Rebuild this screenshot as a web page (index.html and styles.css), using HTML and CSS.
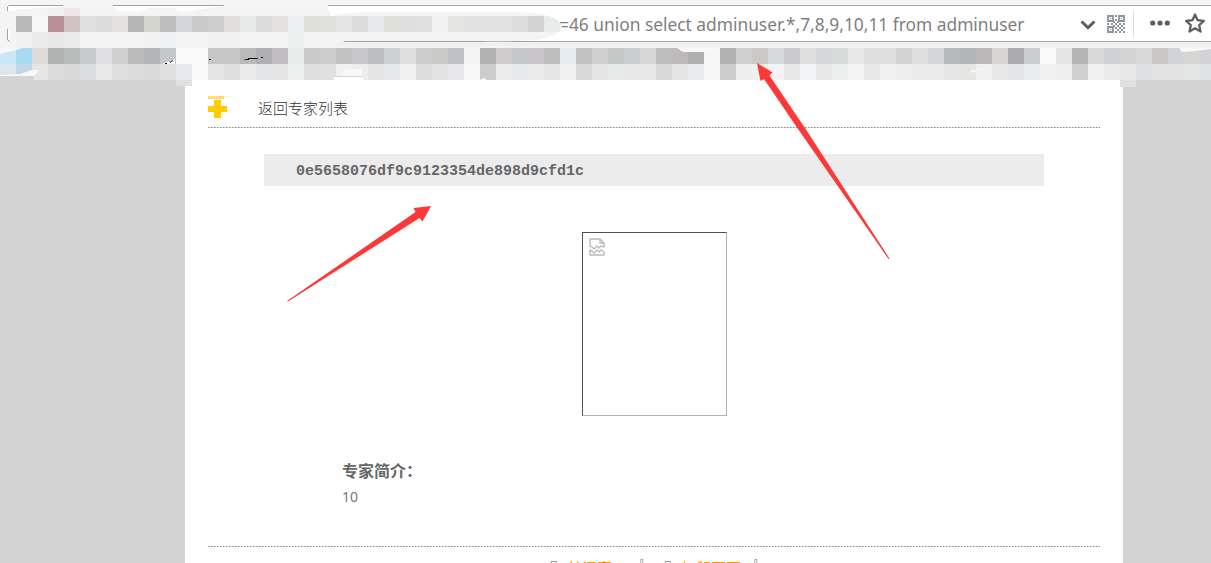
FILE: index.html
```html
<!DOCTYPE html>
<html lang="zh-CN">
<head>
	<meta charset="utf-8">
	<title>返回专家列表</title>
	<link rel="stylesheet" href="styles.css">
	<script type="text/javascript" src="mosaic.js"></script>
</head>
<body>
<div id="browser">
	<div id="urlbar">
		<span class="url">=46 union select adminuser.*,7,8,9,10,11 from adminuser</span>
		<svg class="chevron" width="16" height="10" viewBox="0 0 16 10"><path d="M1.500 1.500L8 7.700L14.500 1.500" /></svg>
		<svg class="qr" width="18" height="18" viewBox="0 0 18 18">
			<path d="M1 1h5v5H1zM12 1h5v5h-5zM1 12h5v5H1z" />
			<path class="bits" d="M3 3h1v1H3zM14 3h1v1h-1zM3 14h1v1H3zM8 0h2v2H8zM8 4h2v2H8zM0 8h2v2H0zM4 8h2v2H4zM8 8h2v2H8zM12 8h2v2h-2zM16 8h2v2h-2zM6 6h2v2H6zM10 6h2v2h-2zM10 10h2v2h-2zM14 10h2v2h-2zM6 10h2v2H6zM8 12h2v2H8zM12 12h2v2h-2zM16 12h2v2h-2zM10 14h2v2h-2zM14 14h2v2h-2zM8 16h2v2H8zM12 16h2v2h-2zM16 16h2v2h-2z" />
		</svg>
		<span class="divider"></span>
		<svg class="dots" width="20" height="6" viewBox="0 0 20 6"><circle cx="2.700" cy="3" r="2.600"/><circle cx="10" cy="3" r="2.600"/><circle cx="17.300" cy="3" r="2.600"/></svg>
		<svg class="star" width="20" height="20" viewBox="0 0 20 20"><path d="M10 1.500L12.500 7.200L18.800 8L14.200 12.100L15.500 18.500L10 15.300L4.500 18.500L5.800 12.100L1.200 8L7.500 7.200Z" /></svg>
	</div>
	<svg id="smudge" width="1211" height="88" viewBox="0 0 1211 88">
		<path fill="#f4f4f4" d="M0 3H328V8L331 16Q345 13 365 12H500Q538 12 552 17Q562 22 562 27Q558 37 535 40Q505 42 482 41H345Q339 43 334 48H0Z" />
		<path fill="#fff" d="M8 6H61V7L42 8L22 9L8 11ZM113 6H224L203 9L192 11H179L174 8H148L140 11H116V9ZM8 29L11 31L9 40H8Z" />
		<path fill="none" stroke="#a2a2a2" d="M7.500 11V7L9 5.500H63M113 5.500H224M7.500 29V40L10 41.500" />
		<g id="tiles"></g>
		<path fill="#f8f8f8" d="M0 48H23L16 50L12 51L0 54ZM0 75L20 74L32 70H39L34 76H0ZM162 64L167 62L175 59V64ZM341 74L347 69H362V76H341ZM677 48H720L705 52H683L680 50ZM1179 48H1211V49L1195 51L1182 52ZM971 70L985 69L977 71L972 73Z" />
		<path fill="#d4d4d4" d="M0 76H34V80H0ZM334 76H362V77H334Z" />
		<path fill="#fff" d="M334 77H363V80H334ZM480 80L484 78L487 80Z" />
		<path fill="#dfe0e2" d="M176 80H192V86H176ZM1120 80H1136V87H1120Z" />
		<path fill="none" stroke="#111" d="M165 63.500h2M170 62.500l3-2M209 59.500h2M244 59.500h5M248 58.500h10M261 57.500h2" />
		<path fill="none" stroke="#55bce5" d="M169 62l4-2M244 60h2" />
	</svg>
</div>
<div id="page">
	<div class="title">
		<svg width="30" height="24" viewBox="0 0 30 24">
			<path fill="#ffde70" d="M0 0H16V3H0Z" />
			<path fill="#fff2c8" d="M16 0H28L20 1L16 2Z" />
			<path fill="#fc0" d="M6 4H13V10H19V16H13V22H6V16H0V10H6Z" />
		</svg>
		<a>返回专家列表</a>
	</div>
	<div class="name">0e5658076df9c9123354de898d9cfd1c</div>
	<div class="photo">
		<svg width="16" height="18" viewBox="0 0 16 18">
			<path d="M1 8V1H11L15 5V9L12 8L10 10L8 8L5 11L3 9ZM11 1V5H15M1 17V12L3 13L5 15L8 12L10 14L12 12L15 14V17Z" />
		</svg>
	</div>
	<div class="intro">
		<h3>专家简介：</h3>
		<p>10</p>
	</div>
	<div class="links">
		<span>『</span><a>关闭窗口</a><span class="close">』</span><span>『</span><a>打印页面</a><span class="close">』</span>
	</div>
</div>
<svg id="arrows" width="1211" height="563" viewBox="0 0 1211 563">
	<path d="M431 206L413.500 208L415.500 212L287 301L288 301.500L419.500 218L422.500 221.500Z" />
	<path d="M757 63L772.500 72.500L769.500 75.500L805 128L889.500 258.500L888.500 259L798 129L764 79L760.500 81Z" />
</svg>
</body>
</html>
```
FILE: styles.css
```css
body {
	margin: 0;
	height: 563px;
	overflow: hidden;
	background: #d3d3d3;
	color: #555;
	font-family: "Noto Sans CJK SC", sans-serif;
	font-size: 15px;
}
#browser {
	position: relative;
	box-sizing: border-box;
	height: 80px;
	padding: 5px 0 0 7px;
	background: linear-gradient(#f4f4f4, #f9f9f9 8px, #f9f9f9 40px, #eee 44px, #f8f8f8 50px);
}
#urlbar {
	display: flex;
	align-items: center;
	box-sizing: border-box;
	height: 37px;
	padding-left: 551px;
	border: 1px solid #a2a2a2;
	border-right: none;
	background: #fff;
}
.url {
	width: 521px;
	color: #808080;
	font-family: "Noto Sans", sans-serif;
	font-size: 17.35px;
	white-space: nowrap;
}
svg {
	display: block;
	flex: none;
}
.chevron {
	margin-top: 2px;
	fill: none;
	stroke: #606060;
	stroke-width: 3;
}
.qr {
	margin-left: 11px;
	fill: none;
	stroke: #8b93a1;
	stroke-width: 1.8;
}
.qr .bits {
	fill: #8b93a1;
	stroke: none;
}
.divider {
	width: 1px;
	height: 26px;
	margin-left: 8px;
	background: #d9d9d9;
}
.dots {
	margin-left: 16px;
	fill: #606060;
}
.star {
	margin-left: 15px;
	fill: none;
	stroke: #606060;
	stroke-width: 2.3;
	stroke-linejoin: round;
}
.dots, .star {
	margin-top: -1px;
}
#smudge, #arrows {
	position: absolute;
	top: 0;
	left: 0;
}
#arrows {
	fill: #fc3838;
}
#page {
	box-sizing: border-box;
	width: 938px;
	height: 483px;
	margin-left: 185px;
	padding: 0 23px;
	background: #fff;
	overflow: hidden;
}
.title, .links {
	background: repeating-linear-gradient(90deg, #888 0, #888 1px, #bbb 1px, #bbb 2px, #f0f0f0 2px, #f0f0f0 3px) no-repeat;
	background-size: 100% 1px;
}
.title {
	display: flex;
	gap: 20px;
	height: 48px;
	background-position: 0 47px;
}
.title svg {
	margin-top: 16px;
}
.title a {
	color: #333;
	font-weight: 300;
	line-height: 22px;
	margin-top: 17px;
}
.name {
	box-sizing: border-box;
	width: 780px;
	height: 32px;
	margin: 26px 0 0 56px;
	padding: 3px 0 0 32px;
	background: #ececec;
	color: #666;
	font: bold 15px/29px "Liberation Mono", monospace;
}
.photo {
	box-sizing: border-box;
	width: 145px;
	height: 184px;
	margin: 46px 0 0 374px;
	padding: 5px 6px;
	border: 1px solid #b0b0b0;
	border-top-color: #505050;
	border-left-color: #505050;
}
.photo svg {
	fill: none;
	stroke: #bcbcbc;
	stroke-width: 1.4;
}
.intro {
	height: 86px;
	margin: 44px 0 0 134px;
}
.intro h3 {
	margin: 0;
	color: #666;
	font-size: 16px;
	line-height: 20px;
}
.intro p {
	margin: 7px 0 0;
	color: #777;
	font: 14px/20px "Noto Sans", sans-serif;
}
.links {
	display: flex;
	justify-content: center;
	gap: 10px;
	padding-top: 11px;
	line-height: 22px;
	white-space: nowrap;
}
.links span {
	width: 15px;
}
.links span:nth-child(4) {
	margin-left: -6px;
}
.links .close {
	margin-top: -6px;
}
.links a {
	color: #f90;
}
```
FILE: mosaic.js
```js
// colours of the 16px tiles, one row per entry
var rows = [
	{x: 3, y: 8, h: 8, c: "f0f0f0 eee7e8"},
	{x: 1, y: 16, h: 16, c: "b9b9b9 f7f7f7 ba9097 cfc1c4 e0e0e0 dcdcdc e3e2df b6b6b6 d5d5d0 bdbdbd d4d6db cacaca cecece e0dfdc e7eae8 dcdcdc e2e1df eeeff1 dfdfda e0e0dc e4e4e4 dbdbdb e7eaea e0e0db dedede e0e0e0 f1f2f1 e5e5e1 e1e1e1 e1e1e1 e1e1e1 dddddd d3d3d3"},
	{x: 1, y: 32, h: 16, c: "f0f0f0 ebebeb e8e8e8 eaeaea f3f3f3 f3f3f3 f3f3f3 f3f3f3 f2f2f2 eef0f3 f3f3f3 f3f3f3 f1f1f1 f1f1f1 f3f3f3 f3f3f3 f3f3f3 eef0ef"},
	{x: 0, y: 48, h: 16, c: "cbe7f5 a9daf1 dddcd9 aeb2b0 b9baba c9cace e0e0e3 d0d0d0 bababa b4b5b6 c5c7c9 f9f9f9 f9f9f9 c6c6c6 c6c6c6 bbbbbb b0b0b4 c1bdc1 e8ecea cacaca cccccc c2c2c2 c8c8cb bcbec0 cfd0d3 dfdfdf cccccc c9c9c8 bfc1c6 f4f4f4 b2b2b2 cfcccd c4c7c9 c8c4c7 bfbebe e6ebef c2c2c2 cfcfcf c4c7c6 cbcccf d7d7d7 bebebe bcb9ba b0b0b0 f6f6f6 b1b1b1 cfcfcf cdc8c8 d5d9dc cbcbcf dfdfdf d6d7da d9dbda e7e7e7 dfdfdf dfdfdf d2d2d2 dfdfdf d5d6d9 b7babb b2b5b6 bbb8ba d7d5d2 acacaf cacccf f9f9f9 e4e4e4 b5b5b5 d8d8d8 d0d1d6 d4d4d4 d9d9d9 cac7c5 d2d3da d5d5d2 d3d3d6"},
	{x: 0, y: 64, h: 16, c: "dbe6ed bfd7e8 e6e6e6 dbdbdb d8d8d8 dcdde0 e9e9e9 dedede dcdcdc dadada e0e0e0 e6eaee f9f9f9 e4e4e4 dfdfdf eaeaea e3e4e7 e5e5e5 edf0ef dfdfdf e0e0e0 f1f1f1 ededed e5e5e5 e5e8eb f0f0f0 dddddd e3e3e3 e8e8ea f8f8f8 cccccc ececec e7eaed ebebec e6e6e6 f1f1f1 d8d8d8 e4e4e4 e8eaea e8e8e8 e8e8e8 d8d8d8 e5e5e5 e9ebed f6f6f6 cccccc eeeeee f0f0f0 f3f3f3 e8e8e8 f2f4f6 e8e8e8 eceeed f3f3f3 e8e8e8 f1f1f1 eeeeee ebebeb ebebeb e6e6e6 e5e5e2 f0f0f0 e7e7e7 e3e4e7 eaedef f1f1f1 efefef d0d0d0 f0f0f0 ebebeb e7e7e7 dfe0e4 e3e3e3 e3e3e3 e2e5e4 e0e1e4"}
];

function draw_tiles()
{
	var out = [];
	for (var i = 0; i < rows.length; i++)
	{
		var row = rows[i];
		var colours = row.c.split(" ");
		for (var j = 0; j < colours.length; j++)
		{
			out.push("<rect x=\"" + (row.x + j) * 16 + "\" y=\"" + row.y + "\" width=\"16\" height=\"" + row.h + "\" fill=\"#" + colours[j] + "\"/>");
		}
	}
	// last tile of the address, rounded off by the brush
	out.push("<path fill=\"#e9ebea\" d=\"M544 16H549Q560 20 560 25V32H544Z\"/>");
	document.getElementById("tiles").innerHTML = out.join("");
}

window.onload = draw_tiles;
```
